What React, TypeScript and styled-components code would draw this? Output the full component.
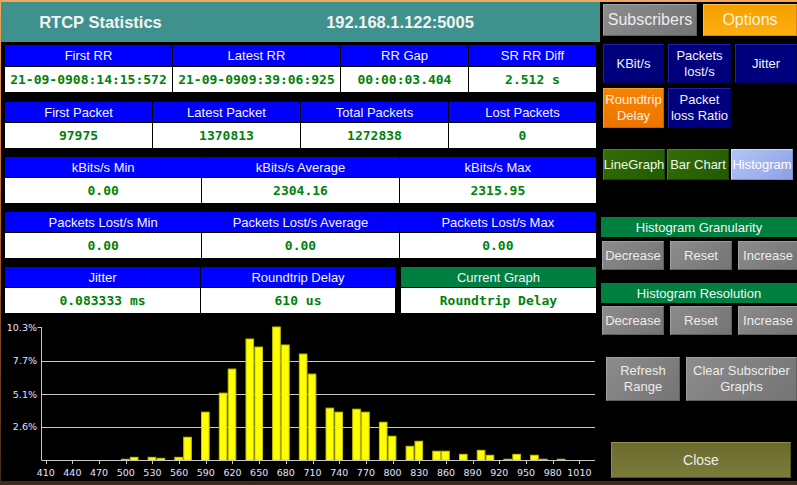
import React from "react";
import styled, { createGlobalStyle, css } from "styled-components";

const GlobalStyle = createGlobalStyle`
  html, body {
    margin: 0;
    padding: 0;
    width: 797px;
    height: 485px;
    overflow: hidden;
  }
  body {
    background: linear-gradient(to bottom, #f2a85c 0%, #b8652e 45%, #3e2918 100%);
    font-family: "Liberation Sans", Arial, sans-serif;
  }
`;

type Variant = "gray" | "amber" | "orange" | "navy" | "green" | "lavender" | "olive";

const variants: Record<Variant, ReturnType<typeof css>> = {
  gray: css`
    background: linear-gradient(135deg, #8c8c8c, #747474);
    border-color: #a0a0a0 #5e5e5e #5e5e5e #a0a0a0;
    color: #ececec;
  `,
  amber: css`
    background: linear-gradient(to bottom, #f4a000, #ffad10);
    border-color: #ffbe40 #d88a00 #d88a00 #ffbe40;
    color: #fff4dc;
  `,
  orange: css`
    background: linear-gradient(to bottom, #f58400, #ee7400);
    border-color: #ff9c30 #c85e00 #c85e00 #ff9c30;
    color: #fff0e0;
  `,
  navy: css`
    background: #00007c;
    border-color: #2020a8 #000060 #000060 #2020a8;
    color: #f2f2ff;
  `,
  green: css`
    background: linear-gradient(135deg, #326e08, #225a00);
    border-color: #46861a #1a4600 #1a4600 #46861a;
    color: #eef8e8;
  `,
  lavender: css`
    background: linear-gradient(135deg, #b4c4fa, #8ea0e2);
    border-color: #d0dcff #7a8cd0 #7a8cd0 #d0dcff;
    color: #ffffff;
  `,
  olive: css`
    background: linear-gradient(to bottom, #6b6b2e, #7b7b3c);
    border-color: #8e8e48 #55551f #55551f #8e8e48;
    color: #ececec;
  `,
};

const Desktop = styled.div`
  width: 797px;
  height: 485px;
  padding: 2px 0 4px 1px;
  box-sizing: border-box;
`;

const Window = styled.div`
  display: flex;
  width: 796px;
  height: 479px;
  background: #000;
`;

const LeftColumn = styled.div`
  width: 599px;
  display: flex;
  flex-direction: column;
`;

const TitleBar = styled.div`
  height: 40px;
  background: #3f918d;
  display: grid;
  grid-template-columns: 199px 1fr;
  align-items: center;
`;

const TitleText = styled.div`
  text-align: center;
  color: #f2f2f2;
  font-weight: 700;
  font-size: 16.5px;
`;

const Tables = styled.div`
  display: flex;
  flex-direction: column;
  gap: 9px;
  padding: 3px 4px 0 4px;
`;

const StatTable = styled.div<{ $cols: string; $head?: number; $extra?: number }>`
  display: grid;
  grid-template-columns: ${(p) => p.$cols};
  grid-template-rows: ${(p) => p.$head ?? 20}px 25px;
  gap: 1px;
  background: #000;
  margin-bottom: ${(p) => p.$extra ?? 0}px;
`;

const HeaderCell = styled.div<{ $green?: boolean; $offset?: number }>`
  background: ${(p) => (p.$green ? "#008040" : "#0000ff")};
  color: #f4f4ff;
  font-size: 13px;
  display: flex;
  align-items: center;
  justify-content: center;
  margin-left: ${(p) => p.$offset ?? 0}px;
`;

const ValueCell = styled.div<{ $offset?: number }>`
  background: #fff;
  color: #00820a;
  font-family: "DejaVu Sans Mono", "Liberation Mono", monospace;
  font-weight: 700;
  font-size: 13px;
  display: flex;
  align-items: center;
  justify-content: center;
  white-space: nowrap;
  margin-left: ${(p) => p.$offset ?? 0}px;
`;

const ChartSvg = styled.svg`
  display: block;
  flex: 1;
`;

const SidePanel = styled.div`
  width: 197px;
  display: flex;
  flex-direction: column;
  background: #000;
`;

const ButtonRow = styled.div<{ $top: number; $gap: number; $left?: number }>`
  display: flex;
  gap: ${(p) => p.$gap}px;
  margin-top: ${(p) => p.$top}px;
  padding-left: ${(p) => p.$left ?? 3}px;
`;

const PanelButton = styled.div<{ $variant: Variant; $w: number; $h: number; $size?: number }>`
  width: ${(p) => p.$w}px;
  height: ${(p) => p.$h}px;
  box-sizing: border-box;
  border: 1px solid;
  ${(p) => variants[p.$variant]}
  font-size: ${(p) => p.$size ?? 13}px;
  line-height: 1.2;
  display: flex;
  align-items: center;
  justify-content: center;
  text-align: center;
  white-space: nowrap;
  flex-shrink: 0;
`;

const SectionHeader = styled.div<{ $top: number }>`
  margin: ${(p) => p.$top}px 0 0 1px;
  height: 20px;
  background: #008040;
  color: #f0f8f0;
  font-size: 13px;
  display: flex;
  align-items: center;
  justify-content: center;
`;

const bins: [number, number][] = [
  [500, 0.08], [510, 0.23], [530, 0.23], [540, 0.15], [560, 0.23], [570, 1.78],
  [590, 3.72], [610, 5.19], [620, 7.05], [640, 9.37], [650, 8.75], [670, 10.3],
  [680, 8.91], [700, 8.21], [710, 6.66], [730, 4.03], [740, 3.72], [760, 3.95],
  [770, 3.72], [790, 2.94], [800, 1.86], [820, 1.08], [830, 1.47], [850, 0.7],
  [860, 0.7], [880, 0.46], [900, 0.77], [910, 0.39], [930, 0.08], [940, 0.46],
  [960, 0.39], [970, 0.08], [990, 0.08],
];

const X0 = 44.7;
const PX_PER_UNIT = 0.8895;
const BASE_Y = 147.3;
const PLOT_H = 133.3;
const MAX_PCT = 10.3;
const AXIS_X = 40.5;
const RIGHT_X = 594;

const xOf = (v: number) => X0 + (v - 410) * PX_PER_UNIT;
const yOf = (pct: number) => BASE_Y - (pct / MAX_PCT) * PLOT_H;

const HistogramChart = () => {
  const ticks = Array.from({ length: 21 }, (_, i) => 410 + i * 30);
  const levels = [10.3, 7.7, 5.1, 2.6];
  const label = { fill: "#e2e2ff", fontSize: 9.5, fontFamily: "DejaVu Sans, sans-serif" };
  return (
    <ChartSvg width={599} height={168}>
      {levels.slice(1).map((l) => (
        <line key={l} x1={AXIS_X} x2={RIGHT_X} y1={Math.round(yOf(l)) + 0.5} y2={Math.round(yOf(l)) + 0.5} stroke="#c8c8c8" />
      ))}
      <line x1={AXIS_X - 4} x2={AXIS_X} y1={14.5} y2={14.5} stroke="#c8c8c8" />
      {levels.map((l) => (
        <text key={l} x={36} y={yOf(l) + 3.5} textAnchor="end" {...label}>
          {l}%
        </text>
      ))}
      {bins.map(([v, pct]) => {
        const h = Math.max(1, (pct / MAX_PCT) * PLOT_H);
        return (
          <rect key={v} x={xOf(v) - 4.3} y={BASE_Y - h} width={7.6} height={h} fill="#ffff00" stroke="#c4c400" strokeWidth={1} />
        );
      })}
      <line x1={AXIS_X} x2={AXIS_X} y1={14} y2={BASE_Y} stroke="#c8c8c8" />
      <line x1={AXIS_X} x2={RIGHT_X} y1={147.5} y2={147.5} stroke="#c8c8c8" />
      {ticks.map((t) => (
        <g key={t}>
          <line x1={Math.round(xOf(t)) + 0.5} x2={Math.round(xOf(t)) + 0.5} y1={147.5} y2={151} stroke="#c8c8c8" />
          <text x={xOf(t)} y={162.5} textAnchor="middle" {...label}>
            {t}
          </text>
        </g>
      ))}
    </ChartSvg>
  );
};

export default function App() {
  return (
    <>
      <GlobalStyle />
      <Desktop>
        <Window>
          <LeftColumn>
            <TitleBar>
              <TitleText>RTCP Statistics</TitleText>
              <TitleText>192.168.1.122:5005</TitleText>
            </TitleBar>
            <Tables>
              <StatTable $cols="167px 167px 127px 1fr" $head={21} $extra={1}>
                <HeaderCell>First RR</HeaderCell>
                <HeaderCell>Latest RR</HeaderCell>
                <HeaderCell>RR Gap</HeaderCell>
                <HeaderCell>SR RR Diff</HeaderCell>
                <ValueCell>21-09-0908:14:15:572</ValueCell>
                <ValueCell>21-09-0909:39:06:925</ValueCell>
                <ValueCell>00:00:03.404</ValueCell>
                <ValueCell>2.512 s</ValueCell>
              </StatTable>
              <StatTable $cols="repeat(4, 1fr)">
                <HeaderCell>First Packet</HeaderCell>
                <HeaderCell>Latest Packet</HeaderCell>
                <HeaderCell>Total Packets</HeaderCell>
                <HeaderCell>Lost Packets</HeaderCell>
                <ValueCell>97975</ValueCell>
                <ValueCell>1370813</ValueCell>
                <ValueCell>1272838</ValueCell>
                <ValueCell>0</ValueCell>
              </StatTable>
              <StatTable $cols="repeat(3, 1fr)">
                <HeaderCell>kBits/s Min</HeaderCell>
                <HeaderCell>kBits/s Average</HeaderCell>
                <HeaderCell>kBits/s Max</HeaderCell>
                <ValueCell>0.00</ValueCell>
                <ValueCell>2304.16</ValueCell>
                <ValueCell>2315.95</ValueCell>
              </StatTable>
              <StatTable $cols="repeat(3, 1fr)">
                <HeaderCell>Packets Lost/s Min</HeaderCell>
                <HeaderCell>Packets Lost/s Average</HeaderCell>
                <HeaderCell>Packets Lost/s Max</HeaderCell>
                <ValueCell>0.00</ValueCell>
                <ValueCell>0.00</ValueCell>
                <ValueCell>0.00</ValueCell>
              </StatTable>
              <StatTable $cols="195px 194px 1fr">
                <HeaderCell>Jitter</HeaderCell>
                <HeaderCell>Roundtrip Delay</HeaderCell>
                <HeaderCell $green $offset={5}>Current Graph</HeaderCell>
                <ValueCell>0.083333 ms</ValueCell>
                <ValueCell>610 us</ValueCell>
                <ValueCell $offset={5}>Roundtrip Delay</ValueCell>
              </StatTable>
            </Tables>
            <HistogramChart />
          </LeftColumn>
          <SidePanel>
            <ButtonRow $top={2} $gap={6}>
              <PanelButton $variant="gray" $w={94} $h={32} $size={16}>Subscribers</PanelButton>
              <PanelButton $variant="amber" $w={94} $h={32} $size={16}>Options</PanelButton>
            </ButtonRow>
            <ButtonRow $top={8} $gap={4}>
              <PanelButton $variant="navy" $w={61} $h={39}>KBit/s</PanelButton>
              <PanelButton $variant="navy" $w={63} $h={39}>
                Packets
                <br />
                lost/s
              </PanelButton>
              <PanelButton $variant="navy" $w={62} $h={39}>Jitter</PanelButton>
            </ButtonRow>
            <ButtonRow $top={5} $gap={4}>
              <PanelButton $variant="orange" $w={61} $h={40}>
                Roundtrip
                <br />
                Delay
              </PanelButton>
              <PanelButton $variant="navy" $w={63} $h={40}>
                Packet
                <br />
                loss Ratio
              </PanelButton>
            </ButtonRow>
            <ButtonRow $top={21} $gap={2}>
              <PanelButton $variant="green" $w={62} $h={31}>LineGraph</PanelButton>
              <PanelButton $variant="green" $w={62} $h={31}>Bar Chart</PanelButton>
              <PanelButton $variant="lavender" $w={62} $h={31}>Histogram</PanelButton>
            </ButtonRow>
            <SectionHeader $top={37}>Histogram Granularity</SectionHeader>
            <ButtonRow $top={4} $gap={6} $left={2}>
              <PanelButton $variant="gray" $w={62} $h={29}>Decrease</PanelButton>
              <PanelButton $variant="gray" $w={62} $h={29}>Reset</PanelButton>
              <PanelButton $variant="gray" $w={60} $h={29}>Increase</PanelButton>
            </ButtonRow>
            <SectionHeader $top={13}>Histogram Resolution</SectionHeader>
            <ButtonRow $top={3} $gap={6} $left={2}>
              <PanelButton $variant="gray" $w={62} $h={29}>Decrease</PanelButton>
              <PanelButton $variant="gray" $w={62} $h={29}>Reset</PanelButton>
              <PanelButton $variant="gray" $w={60} $h={29}>Increase</PanelButton>
            </ButtonRow>
            <ButtonRow $top={22} $gap={6} $left={6}>
              <PanelButton $variant="gray" $w={74} $h={44}>
                Refresh
                <br />
                Range
              </PanelButton>
              <PanelButton $variant="gray" $w={111} $h={44}>
                Clear Subscriber
                <br />
                Graphs
              </PanelButton>
            </ButtonRow>
            <ButtonRow $top={41} $gap={0} $left={11}>
              <PanelButton $variant="olive" $w={180} $h={36} $size={14}>Close</PanelButton>
            </ButtonRow>
          </SidePanel>
        </Window>
      </Desktop>
    </>
  );
}
